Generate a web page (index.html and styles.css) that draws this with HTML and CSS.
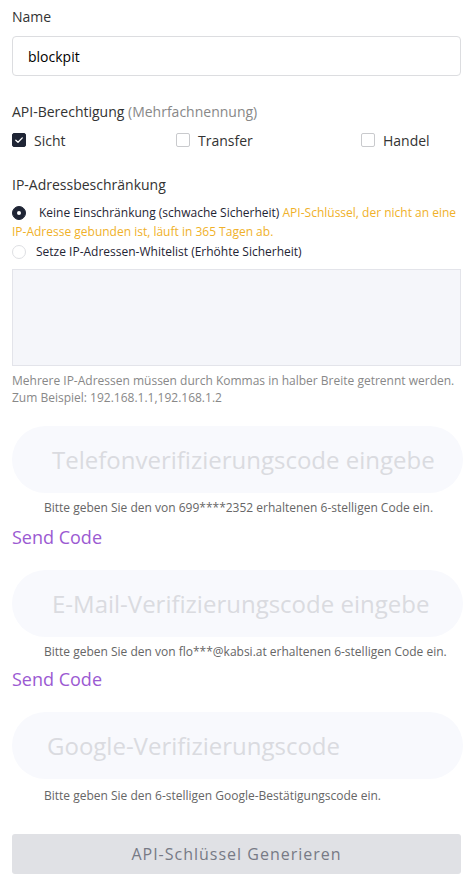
FILE: index.html
```html
<!DOCTYPE html>
<html lang="de">
<head>
<meta charset="utf-8">
<link rel="stylesheet" href="styles.css">
</head>
<body>
<div class="form">
  <div class="label name-label">Name</div>
  <input class="text-input" type="text" value="blockpit">

  <div class="label perm-label">API-Berechtigung <span class="muted">(Mehrfachnennung)</span></div>
  <div class="checks">
    <label class="check c1"><span class="box checked"><svg viewBox="0 0 14 14" width="14" height="14"><path d="M3.8 7.2 L6 9.3 L10.3 4.9" fill="none" stroke="#fff" stroke-width="1.3" stroke-linecap="round" stroke-linejoin="round"/></svg></span>Sicht</label>
    <label class="check c2"><span class="box"></span>Transfer</label>
    <label class="check c3"><span class="box"></span>Handel</label>
  </div>

  <div class="label ip-label">IP-Adressbeschränkung</div>
  <div class="radio-row r1"><span class="radio on"></span><span class="dark">Keine Einschränkung (schwache Sicherheit)</span>&nbsp;<span class="warn">API-Schlüssel, der nicht an eine</span></div>
  <div class="radio-cont warn">IP-Adresse gebunden ist, läuft in 365 Tagen ab.</div>
  <div class="radio-row r2"><span class="radio"></span><span class="dark">Setze IP-Adressen-Whitelist (Erhöhte Sicherheit)</span></div>
  <textarea class="ip-area"></textarea>
  <div class="help">
    <div>Mehrere IP-Adressen müssen durch Kommas in halber Breite getrennt werden.</div>
    <div>Zum Beispiel: 192.168.1.1,192.168.1.2</div>
  </div>

  <div class="code-input first"><span class="ph ph-tel">Telefonverifizierungscode eingebe</span></div>
  <div class="hint">Bitte geben Sie den von 699****2352 erhaltenen 6-stelligen Code ein.</div>
  <div class="send">Send Code</div>

  <div class="code-input"><span class="ph ph-mail">E-Mail-Verifizierungscode eingebe</span></div>
  <div class="hint">Bitte geben Sie den von flo***@kabsi.at erhaltenen 6-stelligen Code ein.</div>
  <div class="send send2">Send Code</div>

  <div class="code-input"><span class="ph ph-google">Google-Verifizierungscode</span></div>
  <div class="hint hint-g">Bitte geben Sie den 6-stelligen Google-Bestätigungscode ein.</div>

  <button class="gen-btn" type="button">API-Schlüssel Generieren</button>
</div>
</body>
</html>
```

FILE: styles.css
```css
* { box-sizing: border-box; }
html, body { margin: 0; padding: 0; background: #fff; }
body {
  font-family: "Open Sans", "Noto Sans", sans-serif;
  color: #333;
  width: 475px;
}
.form {
  padding: 7px 12px 0 12px;
  display: flex;
  flex-direction: column;
}
.label {
  font-size: 14px;
  line-height: 20px;
  color: #333;
}
.muted { color: #888; }
.text-input {
  margin-top: 9px;
  height: 40px;
  width: 449px;
  border: 1px solid #dcdde0;
  border-radius: 4px;
  padding: 0 15px;
  font-family: inherit;
  font-size: 14px;
  color: #000;
  outline: none;
}
.perm-label { margin-top: 26px; }
.checks {
  margin-top: 8px;
  display: flex;
  height: 20px;
  align-items: center;
}
.check {
  display: flex;
  align-items: center;
  font-size: 14px;
  color: #333;
  gap: 8px;
}
.c1 { width: 164px; }
.c2 { width: 185px; }
.box {
  width: 14px;
  height: 14px;
  border: 1px solid #c9cacd;
  border-radius: 2px;
  display: inline-flex;
  background: #fff;
}
.box.checked { background: #1f2535; border-color: #1f2535; }
.box svg { display: block; margin: -1px; }
.ip-label { margin-top: 25px; }
.radio-row {
  font-size: 12px;
  line-height: 19px;
  display: flex;
  align-items: center;
  white-space: nowrap;
}
.r1 { margin-top: 8px; }
.r1 .radio { margin-right: 13px; }
.radio-cont {
  font-size: 12px;
  line-height: 19px;
}
.r2 { margin-top: 1px; }
.r2 .radio { margin-right: 10px; }
.radio {
  position: relative;
  display: inline-block;
  width: 14px;
  height: 14px;
  border-radius: 50%;
  border: 1px solid #dedfe3;
  background: #fff;
  flex: none;
}
.radio.on {
  background: #1f2535;
  border-color: #1f2535;
}
.radio.on::after {
  content: "";
  position: absolute;
  left: 4px;
  top: 4px;
  width: 4px;
  height: 4px;
  border-radius: 50%;
  background: #fff;
}
.dark { color: #1f2535; }
.warn { color: #f0b12a; }
.ip-area {
  margin-top: 8px;
  height: 97px;
  width: 449px;
  background: #f5f6fa;
  border: 1px solid #e3e4ea;
  border-radius: 0;
  resize: none;
  outline: none;
}
.help {
  margin-top: 7px;
  font-size: 12px;
  line-height: 16.5px;
  color: #888;
}
.code-input {
  margin-top: 21px;
  height: 67px;
  border-radius: 34px;
  background: #f8f9fd;
  display: flex;
  align-items: center;
  overflow: hidden;
  white-space: nowrap;
  padding: 0 35px;
}
.code-input.first { margin-top: 20px; }
.ph {
  font-size: 24px;
  color: #dadbe0;
}
.ph-tel, .ph-mail { margin-left: 5px; }
.hint {
  margin-top: 7px;
  padding-left: 32px;
  font-size: 12px;
  line-height: 16px;
  color: #666;
  white-space: nowrap;
}
.hint-g { margin-top: 9px; }
.send {
  margin-top: 9px;
  font-size: 18px;
  line-height: 24px;
  color: #9b5ad2;
}
.send2 { margin-top: 7px; }
.gen-btn {
  margin-top: 30px;
  height: 40px;
  width: 449px;
  border: none;
  border-radius: 3px;
  background: #e0e1e5;
  color: #777a85;
  font-family: inherit;
  font-size: 16px;
  letter-spacing: 1px;
}
```
